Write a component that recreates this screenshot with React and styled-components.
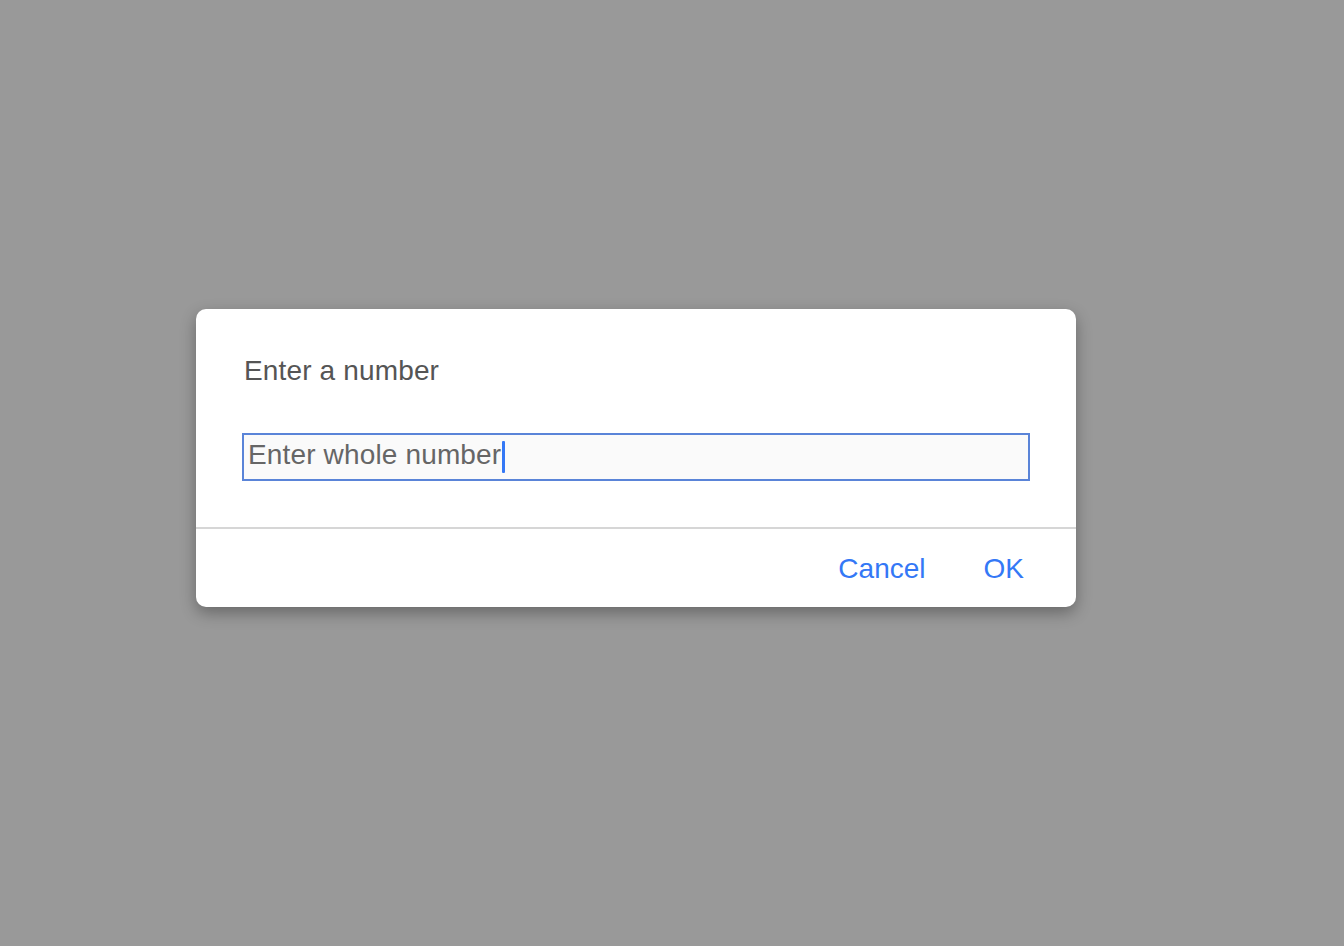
import React from 'react';
import styled, {createGlobalStyle} from 'styled-components';

const GlobalStyle = createGlobalStyle`
    html, body {
        margin: 0;
        padding: 0;
        background-color: #999999;
        font-family: "Liberation Sans", Arial, sans-serif;
    }
`;

const Page = styled.div`
    width: 1344px;
    height: 946px;
    box-sizing: border-box;
    padding: 309px 0 0 196px;
`;

const Dialog = styled.div`
    width: 880px;
    display: flex;
    flex-direction: column;
    background-color: #fff;
    border-radius: 10px;
    box-shadow: 0 6px 16px rgba(0, 0, 0, 0.32);
    overflow: hidden;
`;

const Body = styled.div`
    padding: 46px;
    display: flex;
    flex-direction: column;
`;

const Title = styled.h2`
    margin: 0 0 46px 2px;
    font-size: 28px;
    font-weight: 400;
    line-height: 32px;
    letter-spacing: 0.15px;
    color: #555;
`;

const Field = styled.div`
    height: 48px;
    box-sizing: border-box;
    border: 2px solid #5a84d8;
    background-color: #fafafa;
    padding: 0 4px 5px 4px;
    display: flex;
    align-items: center;
    font-size: 28px;
    line-height: 32px;
    letter-spacing: 0.15px;
    color: #666;
`;

const Caret = styled.span`
    display: inline-block;
    width: 3px;
    height: 32px;
    margin: 5px 0 0 1px;
    background-color: #3478f6;
    border-radius: 1px;
`;

const Footer = styled.div`
    border-top: 2px solid #d6d6d6;
    display: flex;
    align-items: center;
    justify-content: flex-end;
    gap: 58px;
    padding: 1px 52px 0 0;
    box-sizing: border-box;
    height: 80px;
`;

const Button = styled.button`
    background: transparent;
    border: none;
    padding: 0;
    font-family: "Liberation Sans", Arial, sans-serif;
    font-size: 28px;
    line-height: 32px;
    color: #3478f6;
    cursor: pointer;
`;

const App = () => (
    <Page>
        <GlobalStyle/>
        <Dialog>
            <Body>
                <Title>Enter a number</Title>
                <Field>
                    <span>Enter whole number</span>
                    <Caret/>
                </Field>
            </Body>
            <Footer>
                <Button>Cancel</Button>
                <Button>OK</Button>
            </Footer>
        </Dialog>
    </Page>
);

export default App;
